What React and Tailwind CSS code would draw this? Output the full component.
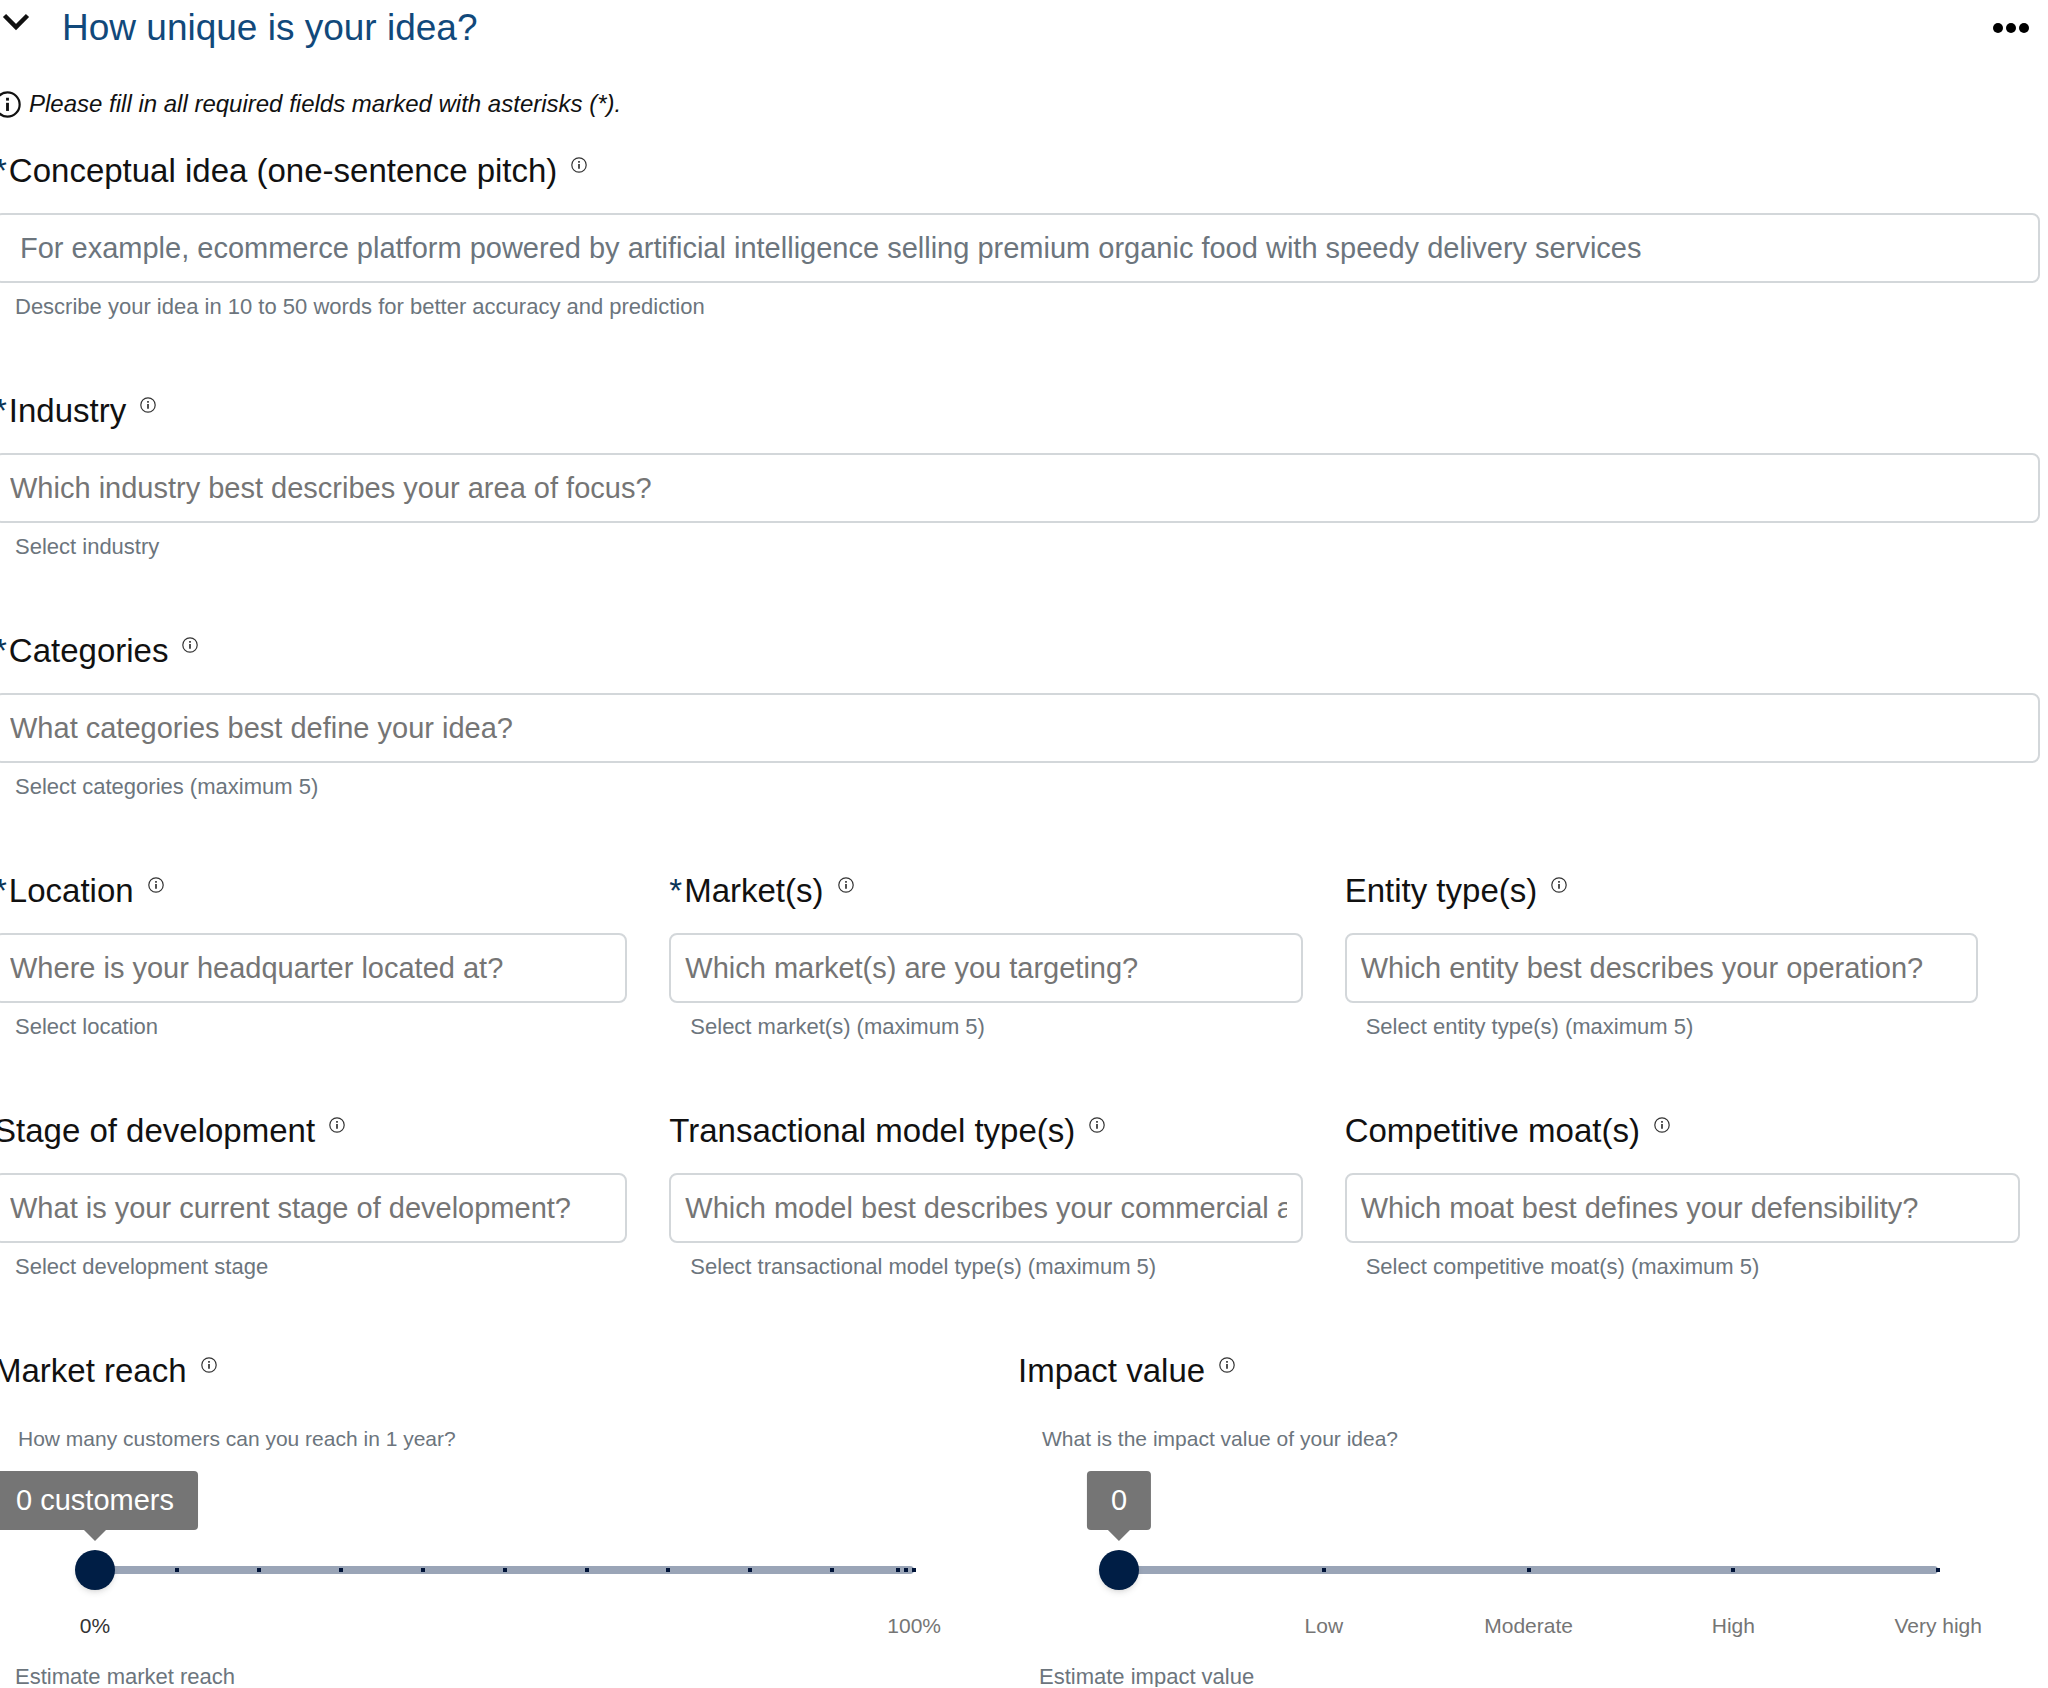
import { useState } from "react";

function InfoIcon({ className, strokeWidth = 1.5 }) {
  return (
    <svg viewBox="0 0 16 16" fill="none" stroke="currentColor" className={className} aria-hidden="true">
      <circle cx="8" cy="8" r="7.2" strokeWidth={strokeWidth} />
      <path d="M8 7v4.8" strokeWidth="1.7" />
      <path d="M8 4v1.7" strokeWidth="1.7" />
    </svg>
  );
}

function FieldLabel({ id, label, required }) {
  return (
    <div className="flex items-start gap-3.5">
      <label htmlFor={id} className="text-[33px] leading-[44px] text-[#111111] whitespace-nowrap">
        {required && <span className="pr-0.5 text-[#0b3558]">*</span>}
        {label}
      </label>
      <button type="button" aria-label={`About ${label}`} className="mt-2">
        <InfoIcon className="size-4 text-[#333333]" strokeWidth={1.2} />
      </button>
    </div>
  );
}

function TextField({ id, label, required, placeholder, help, inputClassName = "px-3.5 placeholder:text-[#757575]" }) {
  return (
    <div className="mb-[72px]">
      <FieldLabel id={id} label={label} required={required} />
      <input
        id={id}
        type="text"
        placeholder={placeholder}
        className={`mt-5 block h-[70px] w-full rounded-lg border-2 border-[#d3d7da] bg-white text-[29px] text-[#212529] placeholder:opacity-100 ${inputClassName}`}
      />
      <p className="mt-3.5 pl-[21px] text-[22px] leading-5 text-[#6c757d]">{help}</p>
    </div>
  );
}

function SliderField({ id, label, question, help, marks, ticks, format }) {
  const [value, setValue] = useState(0);

  return (
    <div>
      <FieldLabel id={id} label={label} />
      <p className="mt-[30px] pl-6 text-[21px] leading-8 text-[#6c757d]">{question}</p>

      <div className="relative mt-[95px] ml-[101px] flex h-10 w-4/5 items-center">
        <div className="h-2 w-full rounded-full bg-[#9aa5b7]" />
        {ticks.map((tick) => (
          <span key={tick} className="absolute size-1 -translate-x-1/2 bg-[#001338]" style={{ left: `${tick}%` }} />
        ))}
        <input
          id={id}
          type="range"
          min="0"
          max="100"
          value={value}
          onChange={(e) => setValue(Number(e.target.value))}
          className="absolute -inset-x-5 h-10 cursor-pointer appearance-none bg-transparent [&::-webkit-slider-thumb]:size-10 [&::-webkit-slider-thumb]:appearance-none [&::-webkit-slider-thumb]:rounded-full [&::-webkit-slider-thumb]:bg-[#001e45] [&::-webkit-slider-thumb]:shadow-md"
        />
        {/* Value bubble */}
        <output
          htmlFor={id}
          className="absolute bottom-[60px] -translate-x-1/2 rounded-sm bg-[#757575] px-6 text-[29px] leading-[59px] whitespace-nowrap text-white"
          style={{ left: `${value}%` }}
        >
          {format(value)}
          <span className="absolute top-full left-1/2 -translate-x-1/2 border-x-[11px] border-t-[11px] border-x-transparent border-t-[#757575]" />
        </output>
      </div>

      <div className="relative mt-5 ml-[101px] h-8 w-4/5 text-[21px] leading-8">
        {marks.map((mark) => (
          <span
            key={mark.at}
            className={`absolute -translate-x-1/2 whitespace-nowrap ${mark.at === value ? "text-[#333333]" : "text-[#757575]"}`}
            style={{ left: `${mark.at}%` }}
          >
            {mark.label}
          </span>
        ))}
      </div>
      <p className="mt-[25px] pl-[21px] text-[22px] leading-5 text-[#6c757d]">{help}</p>
    </div>
  );
}

const detailFields = [
  {
    id: "location",
    label: "Location",
    required: true,
    placeholder: "Where is your headquarter located at?",
    help: "Select location",
  },
  {
    id: "markets",
    label: "Market(s)",
    required: true,
    placeholder: "Which market(s) are you targeting?",
    help: "Select market(s) (maximum 5)",
  },
  {
    id: "entity",
    label: "Entity type(s)",
    placeholder: "Which entity best describes your operation?",
    help: "Select entity type(s) (maximum 5)",
  },
  {
    id: "stage",
    label: "Stage of development",
    placeholder: "What is your current stage of development?",
    help: "Select development stage",
  },
  {
    id: "model",
    label: "Transactional model type(s)",
    placeholder: "Which model best describes your commercial activity?",
    help: "Select transactional model type(s) (maximum 5)",
  },
  {
    id: "moat",
    label: "Competitive moat(s)",
    placeholder: "Which moat best defines your defensibility?",
    help: "Select competitive moat(s) (maximum 5)",
  },
];

export default function App() {
  return (
    <main className="overflow-x-clip bg-white font-['Liberation_Sans',Arial,sans-serif]">
      <form className="-ml-1.5">
        <header className="flex h-14 items-center pr-[18px] pl-2">
          <button type="button" aria-label="Collapse section" className="mb-3">
            <svg viewBox="0 0 28 18" fill="none" stroke="#111111" strokeWidth="4.5" className="h-[18px] w-7">
              <path d="M2.5 2.5 14 14 25.5 2.5" />
            </svg>
          </button>
          <h2 className="ml-8 text-[37px] text-[#11497b]">How unique is your idea?</h2>
          <button type="button" aria-label="More options" className="ml-auto">
            <svg viewBox="0 0 38 12" fill="#000000" className="h-3 w-[38px]">
              <circle cx="6" cy="6" r="5" />
              <circle cx="19" cy="6" r="5" />
              <circle cx="32" cy="6" r="5" />
            </svg>
          </button>
        </header>

        <p className="mt-7 mb-[25px] flex items-center gap-2 text-[24px] leading-10 text-[#111111]">
          <InfoIcon className="size-[27px]" strokeWidth={1.3} />
          <em>Please fill in all required fields marked with asterisks (*).</em>
        </p>

        <div className="pr-2">
          <TextField
            id="concept"
            label="Conceptual idea (one-sentence pitch)"
            required
            placeholder="For example, ecommerce platform powered by artificial intelligence selling premium organic food with speedy delivery services"
            help="Describe your idea in 10 to 50 words for better accuracy and prediction"
            inputClassName="px-6 placeholder:text-[#6c757d]"
          />
          <TextField
            id="industry"
            label="Industry"
            required
            placeholder="Which industry best describes your area of focus?"
            help="Select industry"
          />
          <TextField
            id="categories"
            label="Categories"
            required
            placeholder="What categories best define your idea?"
            help="Select categories (maximum 5)"
          />
        </div>

        {/* The last field has no gutter on its right */}
        <div className="grid grid-cols-3 pr-7">
          {detailFields.map((field, index) => (
            <div key={field.id} className={index === detailFields.length - 1 ? "" : "pr-[42px]"}>
              <TextField {...field} />
            </div>
          ))}
        </div>

        <div className="grid grid-cols-2 pr-1.5">
          <SliderField
            id="reach"
            label="Market reach"
            question="How many customers can you reach in 1 year?"
            help="Estimate market reach"
            ticks={[10, 20, 30, 40, 50, 60, 70, 80, 90, 98, 99, 100]}
            marks={[
              { at: 0, label: "0%" },
              { at: 100, label: "100%" },
            ]}
            format={(value) => `${value} customers`}
          />
          <SliderField
            id="impact"
            label="Impact value"
            question="What is the impact value of your idea?"
            help="Estimate impact value"
            ticks={[25, 50, 75, 100]}
            marks={[
              { at: 25, label: "Low" },
              { at: 50, label: "Moderate" },
              { at: 75, label: "High" },
              { at: 100, label: "Very high" },
            ]}
            format={(value) => `${value}`}
          />
        </div>
      </form>
    </main>
  );
}
